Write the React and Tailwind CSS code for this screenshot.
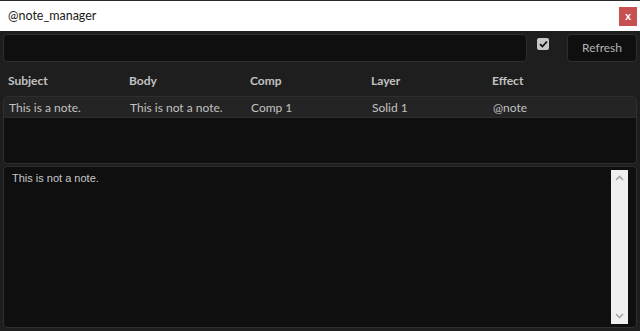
import React from "react";

export default function App() {
  const cols = ["Subject", "Body", "Comp", "Layer", "Effect"];
  const row = ["This is a note.", "This is not a note.", "Comp 1", "Solid 1", "@note"];
  return (
    <div className="w-[640px] h-[331px] bg-[#1e1e1e] flex flex-col overflow-hidden border-t border-[#2b2b2b]" style={{ fontFamily: 'Lato, "Noto Sans", sans-serif' }}>
      <div className="h-[30px] bg-white flex items-center justify-between pl-[8px] pr-[3px] shrink-0">
        <span className="text-[12.5px] text-[#1a1a1a]">@note_manager</span>
        <div className="w-[18px] h-[19px] bg-[#c75050] flex items-center justify-center text-white text-[11px] font-bold leading-none pb-[2px]">x</div>
      </div>
      <div className="flex items-start px-[3px] pt-[3px] gap-[10px] shrink-0">
        <div className="w-[524px] h-[28px] rounded-[4px] border border-[#2e2e2e] bg-[#0f0f0f]" />
        <div className="w-[12px] h-[12px] mt-[4px] bg-[#c6c6c6] rounded-[2px] flex items-center justify-center">
          <svg width="9" height="8" viewBox="0 0 9 8"><path d="M1 4.2 L3.4 6.5 L8 1.5" stroke="#111" strokeWidth="1.8" fill="none" /></svg>
        </div>
        <div className="ml-[8px] w-[70px] h-[28px] rounded-[4px] border border-[#2e2e2e] bg-[#0f0f0f] flex items-center justify-center text-[12px] text-[#b3b3b3]">Refresh</div>
      </div>
      <div className="flex h-[34px] items-center pt-[3px] px-[8px] shrink-0">
        {cols.map((c) => (
          <div key={c} className="w-[121px] text-[12px] font-bold text-[#c2c2c2]">{c}</div>
        ))}
      </div>
      <div className="mx-[3px] h-[68px] rounded-[4px] border border-[#2e2e2e] bg-[#0f0f0f] overflow-hidden shrink-0">
        <div className="flex h-[21px] items-center pt-[1px] px-[5px] bg-[#242424] border-b border-[#2e2e2e]">
          {row.map((c, i) => (
            <div key={i} className="w-[121px] text-[12px] text-[#c2c2c2]">{c}</div>
          ))}
        </div>
      </div>
      <div className="mx-[3px] mt-[2px] h-[162px] rounded-[4px] border border-[#2e2e2e] bg-[#0f0f0f] flex pl-[8px] pr-[8px] pt-[3px] pb-[3px] shrink-0">
        <div className="flex-1 text-[11px] text-[#c8c8c8]" style={{ fontFamily: '"Liberation Sans", Arial, sans-serif' }}>This is not a note.</div>
        <div className="w-[17px] h-[154px] bg-[#efefef] flex flex-col items-center justify-between py-[5px]">
          <svg width="9" height="6" viewBox="0 0 9 6"><path d="M1 5 L4.5 1.5 L8 5" stroke="#a6a6a6" strokeWidth="1.6" fill="none" /></svg>
          <svg width="9" height="6" viewBox="0 0 9 6"><path d="M1 1 L4.5 4.5 L8 1" stroke="#a6a6a6" strokeWidth="1.6" fill="none" /></svg>
        </div>
      </div>
    </div>
  );
}
